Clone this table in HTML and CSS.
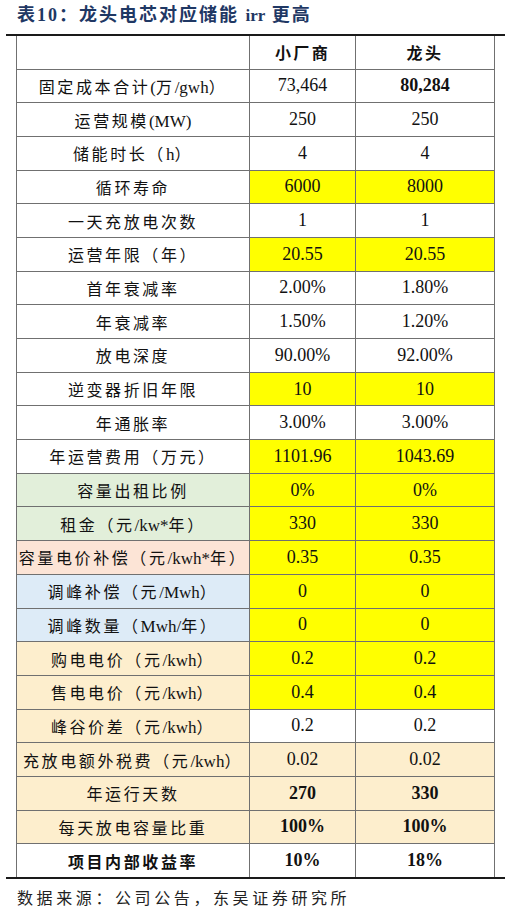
FILE: index.html
```html
<!DOCTYPE html>
<html lang="zh">
<head>
<meta charset="utf-8">
<title>表10</title>
<link rel="stylesheet" href="styles.css">
</head>
<body>
<div class="page">
  <div class="title">表10：龙头电芯对应储能 <span class="lat">irr</span> 更高</div>
  <div class="frame">
    <table class="grid">
      <colgroup><col class="c1"><col class="c2"><col class="c3"></colgroup>
      <tr class="head"><td></td><td class="b">小厂商</td><td class="b">龙头</td></tr>
      <tr><td>固定成本合计<span class="lat">(</span>万<span class="lat">/gwh</span>）</td><td>73,464</td><td class="b">80,284</td></tr>
      <tr><td>运营规模<span class="lat">(MW)</span></td><td>250</td><td>250</td></tr>
      <tr><td>储能时长（<span class="lat">h</span>）</td><td>4</td><td>4</td></tr>
      <tr><td>循环寿命</td><td class="y">6000</td><td class="y">8000</td></tr>
      <tr><td>一天充放电次数</td><td>1</td><td>1</td></tr>
      <tr><td>运营年限（年）</td><td class="y">20.55</td><td class="y">20.55</td></tr>
      <tr><td>首年衰减率</td><td>2.00%</td><td>1.80%</td></tr>
      <tr><td>年衰减率</td><td>1.50%</td><td>1.20%</td></tr>
      <tr><td>放电深度</td><td>90.00%</td><td>92.00%</td></tr>
      <tr><td>逆变器折旧年限</td><td class="y">10</td><td class="y">10</td></tr>
      <tr><td>年通胀率</td><td>3.00%</td><td>3.00%</td></tr>
      <tr><td>年运营费用（万元）</td><td class="y">1101.96</td><td class="y">1043.69</td></tr>
      <tr><td class="g">容量出租比例</td><td class="y">0%</td><td class="y">0%</td></tr>
      <tr><td class="g">租金（元<span class="lat">/kw*</span>年）</td><td class="y">330</td><td class="y">330</td></tr>
      <tr><td class="p">容量电价补偿（元<span class="lat">/kwh*</span>年）</td><td class="y">0.35</td><td class="y">0.35</td></tr>
      <tr><td class="bl">调峰补偿（元<span class="lat">/Mwh</span>）</td><td class="y">0</td><td class="y">0</td></tr>
      <tr><td class="bl">调峰数量（<span class="lat">Mwh/</span>年）</td><td class="y">0</td><td class="y">0</td></tr>
      <tr><td class="o">购电电价（元<span class="lat">/kwh</span>）</td><td class="y">0.2</td><td class="y">0.2</td></tr>
      <tr><td class="o">售电电价（元<span class="lat">/kwh</span>）</td><td class="y">0.4</td><td class="y">0.4</td></tr>
      <tr><td class="o">峰谷价差（元<span class="lat">/kwh</span>）</td><td>0.2</td><td>0.2</td></tr>
      <tr><td class="o">充放电额外税费（元<span class="lat">/kwh</span>）</td><td class="o">0.02</td><td class="o">0.02</td></tr>
      <tr><td class="o">年运行天数</td><td class="o b">270</td><td class="o b">330</td></tr>
      <tr><td class="o">每天放电容量比重</td><td class="o b">100%</td><td class="o b">100%</td></tr>
      <tr><td class="b">项目内部收益率</td><td class="b">10%</td><td class="b">18%</td></tr>
    </table>
  </div>
  <div class="source">数据来源：公司公告，东吴证券研究所</div>
</div>
</body>
</html>
```

FILE: styles.css
```css
html, body {
  margin: 0;
  padding: 0;
  background: #ffffff;
}

.page {
  width: 511px;
  font-family: "Liberation Serif", "Noto Sans CJK SC", serif;
  color: #111;
}

.title {
  height: 30px;
  line-height: 30px;
  margin-bottom: 4px;
  padding-left: 17px;
  font-size: 18px;
  font-weight: bold;
  letter-spacing: 2px;
  color: #1f3864;
}

.lat {
  letter-spacing: 0;
  font-size: 17px;
}

.frame {
  margin: 0 6px;
  border-top: 2px solid #1a1a1a;
  border-bottom: 2px solid #1a1a1a;
}

.grid {
  margin-left: 10px;
  width: 478px;
  border-collapse: collapse;
  table-layout: fixed;
}

.c1 { width: 233px; }
.c2 { width: 106px; }
.c3 { width: 139px; }

.grid td {
  height: 32.7px;
  padding: 0;
  border: 1px solid #707070;
  text-align: center;
  vertical-align: middle;
  white-space: nowrap;
  font-size: 18px;
  letter-spacing: 0;
}

.grid tr:first-child td { border-top: none; }
.grid tr:last-child td { border-bottom: none; }

.grid td:first-child {
  font-size: 16px;
  letter-spacing: 2.6px;
}

.grid tr.head td {
  height: 32.5px;
  font-size: 16px;
  letter-spacing: 2.4px;
}

.b { font-weight: bold; }
.y { background: #ffff00; }
.g { background: #e2efda; }
.p { background: #fce4d6; }
.bl { background: #ddebf7; }
.o { background: #fdeecd; }

.source {
  padding: 6px 0 0 17px;
  font-size: 16px;
  letter-spacing: 3.6px;
  color: #222;
}
```
